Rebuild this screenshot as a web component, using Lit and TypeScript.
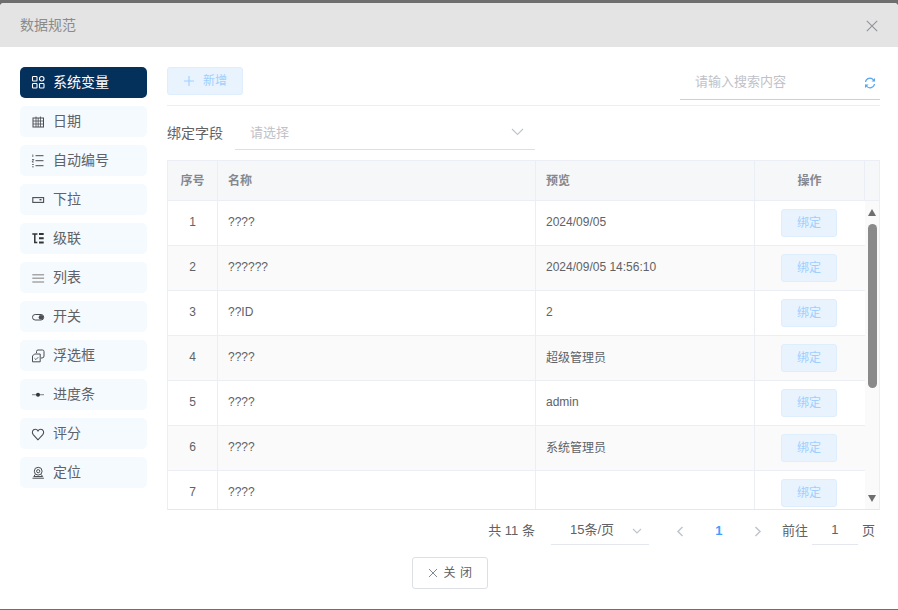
import { LitElement, html, css, svg } from 'lit';
import { customElement } from 'lit/decorators.js';

const icons: Record<string, unknown> = {
  grid: svg`<g fill="none" stroke="currentColor" stroke-width="1.1"><rect x="1.500" y="1.500" width="4.500" height="4.500" rx=".8"/><rect x="8.500" y="1.500" width="4.500" height="4.500" rx="2.200"/><rect x="1.500" y="8.500" width="4.500" height="4.500" rx=".8"/><rect x="8.500" y="8.500" width="4.500" height="4.500" rx=".8"/></g>`,
  date: svg`<g fill="none" stroke="currentColor" stroke-width="1"><rect x="2" y="4" width="10.500" height="9"/><path d="M2 7h10.500M2 10h10.500M5 2.500V13M7.200 4v9M9.500 2.500V13" stroke-width=".8"/></g>`,
  number: svg`<g fill="none" stroke="currentColor" stroke-width="1"><path d="M4.500 2.700h8M4.500 7.700h8M4.500 12.700h8"/><path d="M1.800 1.500v2.500M1 6.500h1.800L1 9h1.800M1 11.500h1.800M1 13.800h1.800" stroke-width=".8"/></g>`,
  select: svg`<rect x="1.800" y="5.600" width="10.800" height="4.800" fill="none" stroke="currentColor" stroke-width="1.100"/><rect x="8.500" y="7" width="2" height="1.400" fill="currentColor"/>`,
  cascade: svg`<g fill="none" stroke="#333"><path d="M1.300 3h5.200M3.800 3v8.500h2.500" stroke-width="1.500"/><path d="M8 3h4.700M8 7.200h4.700M8 11.500h4.700" stroke-width="1.900"/></g>`,
  list: svg`<path d="M1.300 4.700h11.800M1.300 8.300h11.800M1.300 12h11.800" fill="none" stroke="#a6a6a6" stroke-width="1.400"/>`,
  toggle: svg`<rect x="1.500" y="5.500" width="11.200" height="5.500" rx="2.700" fill="none" stroke="currentColor" stroke-width="1"/><circle cx="10" cy="8.200" r="2.300" fill="currentColor"/>`,
  popup: svg`<g fill="none" stroke="currentColor" stroke-width="1"><path d="M3.500 6h5.700v7.800H1.500V8z"/><path d="M5.500 5V3.500A1.500 1.500 0 0 1 7 2h4.500A1.500 1.500 0 0 1 13 3.500V8a2 2 0 0 1-2 2h-1"/><path d="M3.500 10.300l1.400 1.300 2.400-2.400" stroke-width=".9"/></g>`,
  slider: svg`<path d="M1 7.700h12" fill="none" stroke="#8a8a8a" stroke-width="1.100"/><circle cx="7" cy="7.700" r="2" fill="#2f3640"/>`,
  heart: svg`<path d="M7 13.800 2.200 8.700C.5 6.500 1.500 3.200 4.300 3.200 5.500 3.200 6.400 3.900 7 4.900 7.600 3.900 8.500 3.200 9.700 3.200 12.500 3.200 13.500 6.500 11.800 8.700Z" fill="none" stroke="currentColor" stroke-width="1.100"/>`,
  location: svg`<g fill="none" stroke="currentColor" stroke-width="1"><circle cx="7.200" cy="6.200" r="3.900"/><circle cx="7.200" cy="6.200" r="1.600"/><path d="M4.200 9.500 2.800 11.500h8.800L10.200 9.500M1.500 13.200h11.400"/></g>`,
};

const MENU = [
  ['grid', '系统变量'],
  ['date', '日期'],
  ['number', '自动编号'],
  ['select', '下拉'],
  ['cascade', '级联'],
  ['list', '列表'],
  ['toggle', '开关'],
  ['popup', '浮选框'],
  ['slider', '进度条'],
  ['heart', '评分'],
  ['location', '定位'],
];

const ROWS = [
  ['1', '????', '2024/09/05'],
  ['2', '??????', '2024/09/05 14:56:10'],
  ['3', '??ID', '2'],
  ['4', '????', '超级管理员'],
  ['5', '????', 'admin'],
  ['6', '????', '系统管理员'],
  ['7', '????', ''],
];

const isLatin = (s: string) => /^[\x00-\x7f]*$/.test(s);

@customElement('app-root')
export class AppRoot extends LitElement {
  static styles = css`
    :host {
      display: block;
      width: 898px;
      height: 610px;
      background: #6e6e6e;
      font-family: 'Liberation Sans', 'Noto Sans CJK SC', sans-serif;
      font-size: 13px;
      line-height: 1;
      color: #606266;
      overflow: hidden;
    }

    .dialog {
      margin-top: 3px;
      height: 606px;
      background: #fff;
      border-radius: 4px 4px 0 0;
      display: flex;
      flex-direction: column;
    }

    .head {
      height: 44px;
      flex: none;
      background: #e4e4e4;
      border-radius: 4px 4px 0 0;
      display: flex;
      align-items: center;
      justify-content: space-between;
      padding: 0 20px;
      font-size: 14px;
      color: #8b8b8b;
    }

    .head svg {
      display: block;
      margin-top: 2px;
    }

    .body {
      flex: none;
      display: flex;
      gap: 20px;
      padding: 20px 18px 0 20px;
    }

    .menu {
      width: 127px;
      flex: none;
      display: flex;
      flex-direction: column;
      gap: 8px;
    }

    .item {
      height: 31px;
      box-sizing: border-box;
      border-radius: 5px;
      background: #f5faff;
      display: flex;
      align-items: center;
      gap: 7px;
      padding-left: 11px;
      color: #606266;
      font-size: 14px;
    }

    .item span {
      padding-bottom: 2px;
    }

    .item svg {
      width: 15px;
      height: 15px;
      flex: none;
      color: #4a4d52;
    }

    .item.active {
      background: #04305c;
      color: #fff;
    }

    .item.active svg {
      color: #fff;
    }

    .main {
      flex: 1;
      min-width: 0;
      display: flex;
      flex-direction: column;
    }

    .toolbar {
      height: 39px;
      flex: none;
      box-sizing: border-box;
      border-bottom: 1px solid #ebeef5;
      display: flex;
      justify-content: space-between;
      align-items: flex-start;
    }

    .add {
      width: 76px;
      height: 28px;
      box-sizing: border-box;
      border: 1px solid #deeefd;
      border-radius: 3px;
      background: #e8f3fe;
      color: #a0cfff;
      font-size: 12px;
      display: flex;
      align-items: center;
      justify-content: center;
      gap: 8px;
    }

    .search {
      width: 200px;
      height: 33px;
      box-sizing: border-box;
      border-bottom: 1px solid #cfcfcf;
      display: flex;
      align-items: center;
      justify-content: space-between;
      padding: 0 4px 1px 15px;
      color: #bfc2c7;
    }

    .search span {
      padding-bottom: 2px;
    }

    .field {
      height: 54px;
      flex: none;
      box-sizing: border-box;
      padding-bottom: 1px;
      display: flex;
      align-items: center;
      gap: 12px;
    }

    .field label {
      font-size: 14px;
      color: #606266;
    }

    .picker {
      width: 300px;
      height: 34px;
      box-sizing: border-box;
      border-bottom: 1px solid #dcdfe6;
      display: flex;
      align-items: center;
      justify-content: space-between;
      padding: 0 11px 0 15px;
      color: #bfc2c7;
    }

    .table {
      height: 350px;
      flex: none;
      box-sizing: border-box;
      border: 1px solid #ebeef5;
      border-bottom-color: #e4e7ed;
      display: flex;
      flex-direction: column;
      overflow: hidden;
      font-size: 12px;
    }

    .row {
      display: grid;
      grid-template-columns: 50px 318px 219px 110px;
      flex: none;
      height: 45px;
      box-sizing: border-box;
      border-bottom: 1px solid #ebeef5;
    }

    .row.header {
      height: 40px;
      grid-template-columns: 50px 318px 219px 110px 15px;
      background: #f5f7f9;
      font-weight: bold;
      color: #85888e;
    }

    .row.even {
      background: #fafafa;
    }

    .cell {
      border-right: 1px solid #ebeef5;
      display: flex;
      align-items: center;
      padding-left: 10px;
      min-width: 0;
    }

    .cell.center {
      justify-content: center;
      padding-left: 0;
    }

    .cell.latin {
      padding-bottom: 2px;
    }

    .cell.last {
      border-right: none;
    }

    .content {
      flex: 1;
      min-height: 0;
      display: flex;
    }

    .rows {
      width: 697px;
      flex: none;
    }

    .bar {
      flex: 1;
      position: relative;
      background: #fafafa;
    }

    .arrow {
      position: absolute;
      left: 3px;
      width: 0;
      height: 0;
      border-left: 4.5px solid transparent;
      border-right: 4.5px solid transparent;
    }

    .arrow.up {
      top: 8px;
      border-bottom: 7px solid #6e6e6e;
    }

    .arrow.down {
      bottom: 7px;
      border-top: 7px solid #6e6e6e;
    }

    .thumb {
      position: absolute;
      left: 3px;
      top: 23px;
      width: 9px;
      height: 164px;
      border-radius: 5px;
      background: #8a8a8a;
    }

    .bind {
      width: 56px;
      height: 28px;
      box-sizing: border-box;
      margin-right: 2px;
      border: 1px solid #deeefd;
      border-radius: 3px;
      background: #e8f3fe;
      color: #a0cfff;
      display: flex;
      align-items: center;
      justify-content: center;
    }

    .pager {
      height: 42px;
      flex: none;
      display: flex;
      align-items: center;
      justify-content: flex-end;
      padding-right: 5px;
    }

    .pager span {
      padding-bottom: 2px;
    }

    .size {
      width: 98px;
      height: 28px;
      box-sizing: border-box;
      margin-left: 16px;
      border-bottom: 1px solid #e4e7ed;
      display: flex;
      align-items: center;
      justify-content: space-between;
      padding: 0 7px 0 19px;
    }

    .nav {
      display: flex;
      align-items: center;
      margin-left: 27px;
    }

    .page {
      width: 70px;
      text-align: center;
      font-weight: bold;
      color: #409eff;
    }

    .jump {
      margin-left: 20px;
    }

    .jump-input {
      width: 46px;
      height: 28px;
      box-sizing: border-box;
      margin: 0 4px;
      border-bottom: 1px solid #e4e7ed;
      display: flex;
      align-items: center;
      justify-content: center;
    }

    .foot {
      flex: none;
      display: flex;
      justify-content: center;
      padding: 5px 0 0 2px;
    }

    .close {
      width: 76px;
      height: 32px;
      box-sizing: border-box;
      border: 1px solid #dcdfe6;
      border-radius: 3px;
      display: flex;
      align-items: center;
      justify-content: center;
      gap: 6px;
      letter-spacing: 0.5px;
      font-size: 12px;
    }
  `;

  private renderRow(r: string[], i: number) {
    return html`
      <div class="row ${i % 2 ? 'even' : ''}">
        <div class="cell center latin">${r[0]}</div>
        <div class="cell latin">${r[1]}</div>
        <div class="cell ${isLatin(r[2]) ? 'latin' : ''}">${r[2]}</div>
        <div class="cell center last"><div class="bind">绑定</div></div>
      </div>
    `;
  }

  render() {
    return html`
      <div class="dialog">
        <div class="head">
          <span>数据规范</span>
          <svg width="12" height="12" viewBox="0 0 12 12"><path d="M.8.8l10.400 10.400M11.200.8.8 11.200" fill="none" stroke="#909399" stroke-width="1.100"/></svg>
        </div>
        <div class="body">
          <div class="menu">
            ${MENU.map(([icon, label], i) => html`
              <div class="item ${i === 0 ? 'active' : ''}">
                <svg viewBox="0 0 15 15">${icons[icon]}</svg>
                <span>${label}</span>
              </div>
            `)}
          </div>
          <div class="main">
            <div class="toolbar">
              <div class="add">
                <svg width="12" height="12" viewBox="0 0 12 12"><path d="M6 1v10M1 6h10" fill="none" stroke="currentColor" stroke-width="1.100"/></svg>
                <span>新增</span>
              </div>
              <div class="search">
                <span>请输入搜索内容</span>
                <svg width="12" height="12" viewBox="0 0 12 12"><g fill="none" stroke="#56a6ee" stroke-width="1.200"><path d="M1.500 5A4.500 4.500 0 0 1 9.500 3l1 1"/><path d="M10.500 7A4.500 4.500 0 0 1 2.500 9l-1-1"/></g><path d="M11 1v3.500H7.500zM1 11V7.500h3.500z" fill="#56a6ee"/></svg>
              </div>
            </div>
            <div class="field">
              <label>绑定字段</label>
              <div class="picker">
                <span>请选择</span>
                <svg width="13" height="8" viewBox="0 0 13 8"><path d="M1 1l5.500 5.500L12 1" fill="none" stroke="#c0c4cc" stroke-width="1.100"/></svg>
              </div>
            </div>
            <div class="table">
              <div class="row header">
                <div class="cell center">序号</div>
                <div class="cell">名称</div>
                <div class="cell">预览</div>
                <div class="cell center">操作</div>
                <div class="cell last"></div>
              </div>
              <div class="content">
                <div class="rows">${ROWS.map((r, i) => this.renderRow(r, i))}</div>
                <div class="bar">
                  <div class="arrow up"></div>
                  <div class="thumb"></div>
                  <div class="arrow down"></div>
                </div>
              </div>
            </div>
            <div class="pager">
              <span>共 11 条</span>
              <div class="size">
                <span>15条/页</span>
                <svg width="10" height="6" viewBox="0 0 10 6"><path d="M1 1l4 4 4-4" fill="none" stroke="#c0c4cc" stroke-width="1.100"/></svg>
              </div>
              <div class="nav">
                <svg width="8" height="11" viewBox="0 0 8 11"><path d="M6.500 1 2 5.500 6.500 10" fill="none" stroke="#c0c4cc" stroke-width="1.500"/></svg>
                <span class="page">1</span>
                <svg width="8" height="11" viewBox="0 0 8 11"><path d="M1.500 1 6 5.500 1.500 10" fill="none" stroke="#c0c4cc" stroke-width="1.500"/></svg>
              </div>
              <span class="jump">前往</span>
              <div class="jump-input"><span>1</span></div>
              <span>页</span>
            </div>
          </div>
        </div>
        <div class="foot">
          <div class="close">
            <svg width="10" height="10" viewBox="0 0 10 10"><path d="M1 1l8 8M9 1 1 9" fill="none" stroke="#85888e" stroke-width="1"/></svg>
            <span>关 闭</span>
          </div>
        </div>
      </div>
    `;
  }
}
